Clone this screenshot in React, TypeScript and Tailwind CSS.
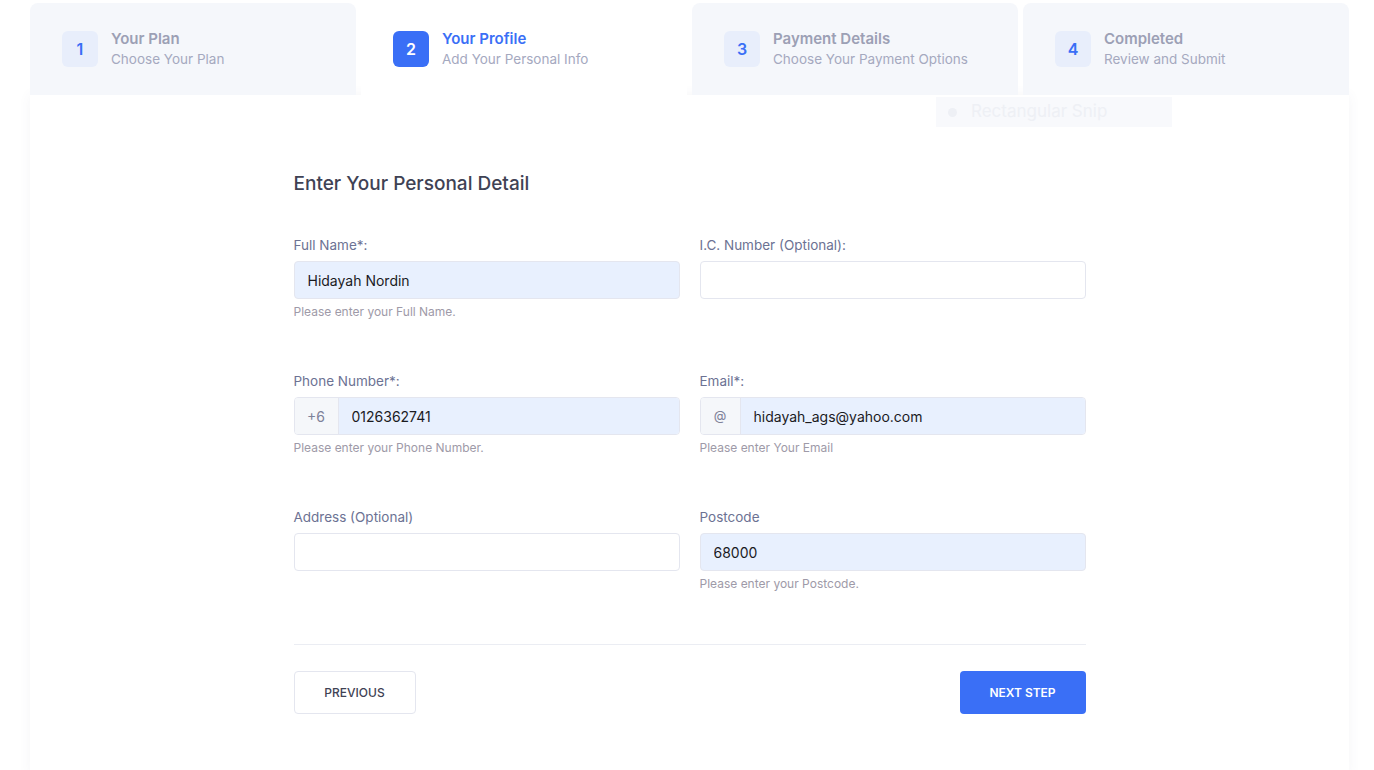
const steps = [
  { n: 1, title: 'Your Plan', sub: 'Choose Your Plan' },
  { n: 2, title: 'Your Profile', sub: 'Add Your Personal Info' },
  { n: 3, title: 'Payment Details', sub: 'Choose Your Payment Options' },
  { n: 4, title: 'Completed', sub: 'Review and Submit' },
];

const active = 2;

const Label = ({ children }: { children: React.ReactNode }) => (
  <label className="block text-[13.5px] text-[#6c7293] mb-[8px] leading-[16px]">{children}</label>
);

const Help = ({ children }: { children?: React.ReactNode }) => (
  <p className="text-[12px] text-[#9e9aa8] mt-[6px] h-[14px] leading-[14px]">{children}</p>
);

const inputBase =
  'h-[38px] w-full rounded-[4px] border border-[#e4e6ef] px-[13px] text-[14px] text-[#1b1b1f] outline-none';

export default function App() {
  return (
    <div
      className="min-h-[770px] bg-white pl-[30px] pr-[25px] pt-[3px] overflow-hidden"
      style={{ fontFamily: 'Inter, "Open Sans", sans-serif' }}
    >
      {/* steps */}
      <div className="flex gap-[5px] relative z-10">
        {steps.map((s) => {
          const on = s.n === active;
          return (
            <div
              key={s.n}
              className={`flex-1 h-[92px] rounded-t-[8px] flex items-center pl-[32px] gap-[13px] ${
                on ? 'bg-white' : 'bg-[#f5f7fb]'
              }`}
            >
              <div
                className={`w-[36px] h-[36px] rounded-[6px] flex items-center justify-center text-[16px] font-semibold ${
                  on ? 'bg-[#3a6ff6] text-white' : 'bg-[#e8eefb] text-[#3a6ff6]'
                }`}
              >
                {s.n}
              </div>
              <div className="flex flex-col">
                <span className={`text-[15px] font-semibold leading-[20px] ${on ? 'text-[#3a6ff6]' : 'text-[#9ca0b5]'}`}>
                  {s.title}
                </span>
                <span className="text-[13.5px] text-[#a5a9bf] leading-[20px]">{s.sub}</span>
              </div>
            </div>
          );
        })}
      </div>

      {/* card */}
      <div className="relative bg-white shadow-[0_0_12px_rgba(80,90,120,0.06)] min-h-[680px]">
        <div className="absolute left-[906px] top-[2px] w-[236px] h-[30px] bg-[#f8f9fc] flex items-center gap-[14px] pl-[12px] text-[17px] text-[#eef0f5]">
          <span className="w-[9px] h-[9px] rounded-full bg-[#eef0f5]" />
          Rectangular Snip
        </div>

        <div className="w-[792px] mx-auto pt-[77px]">
          <h3 className="text-[19px] font-medium text-[#3f4254] leading-[24px]">Enter Your Personal Detail</h3>

          <div className="grid grid-cols-2 gap-x-[20px] mt-[41px]">
            <div>
              <Label>Full Name*:</Label>
              <input className={`${inputBase} bg-[#e8f0fe]`} defaultValue="Hidayah Nordin" />
              <Help>Please enter your Full Name.</Help>
            </div>
            <div>
              <Label>I.C. Number (Optional):</Label>
              <input className={`${inputBase} bg-white`} />
              <Help />
            </div>
          </div>

          <div className="grid grid-cols-2 gap-x-[20px] mt-[54px]">
            <div>
              <Label>Phone Number*:</Label>
              <div className="flex h-[38px] rounded-[4px] border border-[#e4e6ef] overflow-hidden">
                <span className="w-[44px] bg-[#f5f7fa] border-r border-[#e4e6ef] flex items-center justify-center text-[14px] text-[#7e8299]">
                  +6
                </span>
                <input
                  className="flex-1 bg-[#e8f0fe] px-[13px] text-[14px] text-[#1b1b1f] outline-none"
                  defaultValue="0126362741"
                />
              </div>
              <Help>Please enter your Phone Number.</Help>
            </div>
            <div>
              <Label>Email*:</Label>
              <div className="flex h-[38px] rounded-[4px] border border-[#e4e6ef] overflow-hidden">
                <span className="w-[40px] bg-[#f5f7fa] border-r border-[#e4e6ef] flex items-center justify-center text-[13px] text-[#7e8299]">
                  @
                </span>
                <input
                  className="flex-1 bg-[#e8f0fe] px-[13px] text-[14px] text-[#1b1b1f] outline-none"
                  defaultValue="hidayah_ags@yahoo.com"
                />
              </div>
              <Help>Please enter Your Email</Help>
            </div>
          </div>

          <div className="grid grid-cols-2 gap-x-[20px] mt-[54px]">
            <div>
              <Label>Address (Optional)</Label>
              <input className={`${inputBase} bg-white`} />
              <Help />
            </div>
            <div>
              <Label>Postcode</Label>
              <input className={`${inputBase} bg-[#e8f0fe]`} defaultValue="68000" />
              <Help>Please enter your Postcode.</Help>
            </div>
          </div>

          <div className="border-t border-[#ebedf3] mt-[53px] pt-[26px] flex justify-between">
            <button className="h-[43px] w-[122px] rounded-[4px] border border-[#e4e6ef] bg-white text-[12px] font-medium text-[#3f4254]">
              PREVIOUS
            </button>
            <button className="h-[43px] w-[126px] rounded-[4px] bg-[#3a6ff6] text-[12px] font-semibold text-white">
              NEXT STEP
            </button>
          </div>
        </div>
      </div>
    </div>
  );
}
